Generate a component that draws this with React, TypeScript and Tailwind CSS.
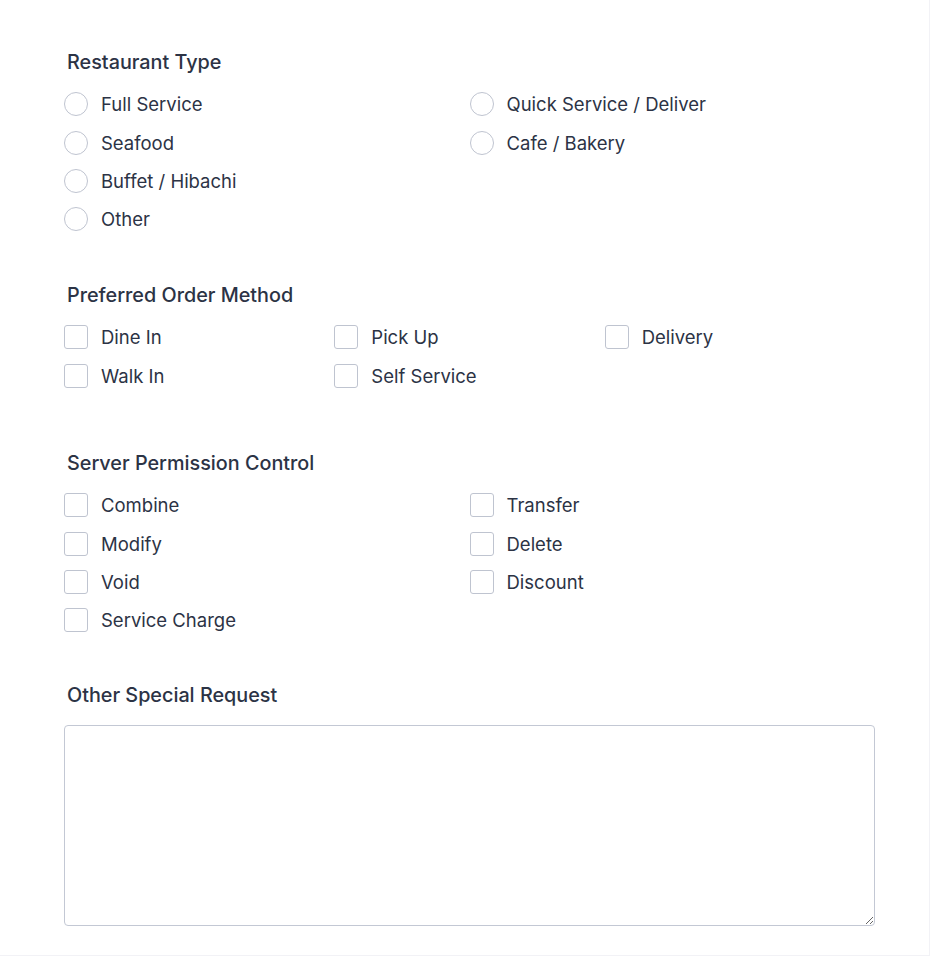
import React from "react";

const font = { fontFamily: "Inter, 'Noto Sans', sans-serif" };

function Radio({ label }: { label: string }) {
  return (
    <label className="flex h-[38.4px] items-center">
      <span className="h-6 w-6 shrink-0 rounded-full border border-[#bfc4d0] bg-white" />
      <span className="ml-[13px] text-[18.5px] leading-6 text-[#2c3345]">{label}</span>
    </label>
  );
}

function Check({ label }: { label: string }) {
  return (
    <label className="flex h-[38.4px] items-center">
      <span className="h-6 w-6 shrink-0 rounded-[3px] border border-[#bfc4d0] bg-white" />
      <span className="ml-[13px] text-[18.5px] leading-6 text-[#2c3345]">{label}</span>
    </label>
  );
}

function Heading({ children }: { children: React.ReactNode }) {
  return (
    <div className="pl-[3px] text-[19.8px] font-medium leading-6 text-[#2c3345]">{children}</div>
  );
}

export default function App() {
  return (
    <div
      style={font}
      className="h-[956px] w-[930px] overflow-hidden border-b border-r border-[#f2f2f6] bg-white"
    >
      <div className="w-[875px] pl-[64px] pt-[50px]">
        <Heading>Restaurant Type</Heading>
        <div className="mt-[11px] grid grid-cols-2">
          <div className="flex flex-col">
            <Radio label="Full Service" />
            <Radio label="Seafood" />
            <Radio label="Buffet / Hibachi" />
            <Radio label="Other" />
          </div>
          <div className="flex flex-col">
            <Radio label="Quick Service / Deliver" />
            <Radio label="Cafe / Bakery" />
          </div>
        </div>

        <div className="mt-[44.6px]">
          <Heading>Preferred Order Method</Heading>
          <div className="mt-[10.8px] grid grid-cols-3">
            <Check label="Dine In" />
            <Check label="Pick Up" />
            <Check label="Delivery" />
            <Check label="Walk In" />
            <Check label="Self Service" />
          </div>
        </div>

        <div className="mt-[56.4px]">
          <Heading>Server Permission Control</Heading>
          <div className="mt-[10.8px] grid grid-cols-2">
            <div className="flex flex-col">
              <Check label="Combine" />
              <Check label="Modify" />
              <Check label="Void" />
              <Check label="Service Charge" />
            </div>
            <div className="flex flex-col">
              <Check label="Transfer" />
              <Check label="Delete" />
              <Check label="Discount" />
            </div>
          </div>
        </div>

        <div className="mt-[43.6px]">
          <Heading>Other Special Request</Heading>
          <textarea
            className="mt-[18px] block h-[201px] w-[811px] rounded-[4px] border border-[#c3c8d4] bg-white outline-none"
            style={{ resize: "both" }}
          />
        </div>
      </div>
    </div>
  );
}
